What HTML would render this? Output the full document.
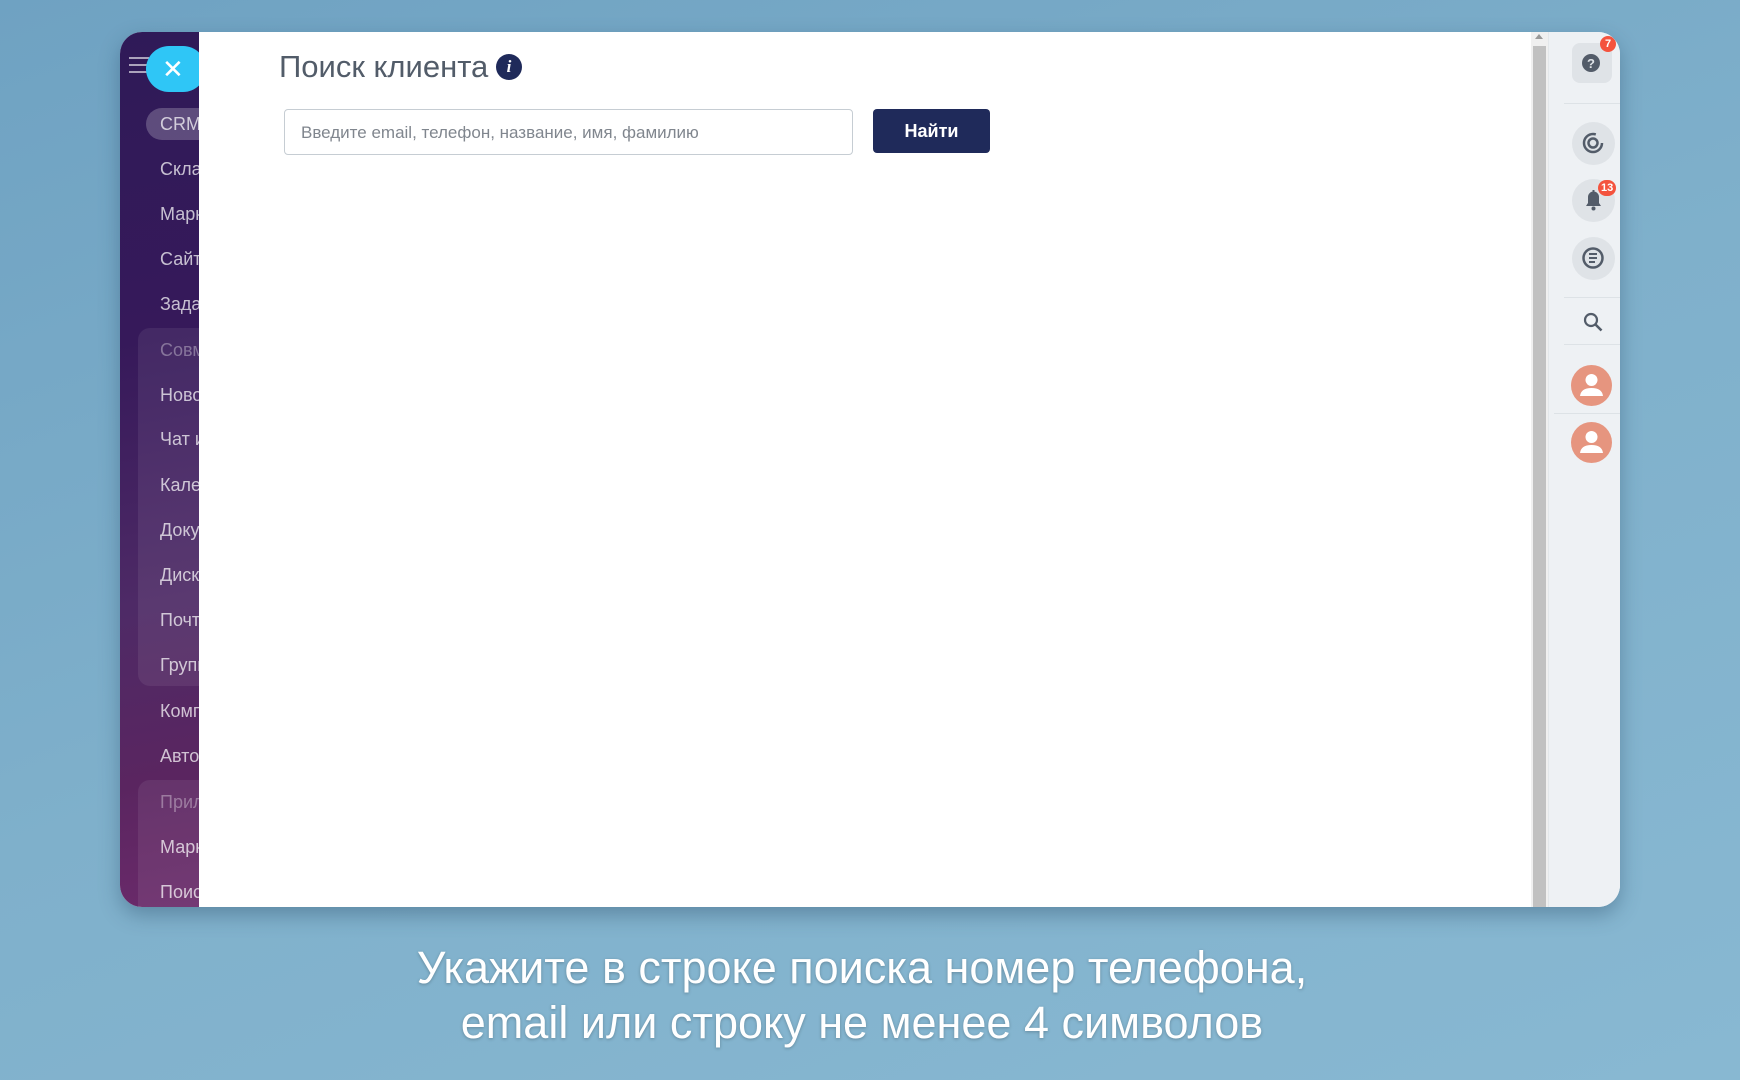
<!DOCTYPE html>
<html><head><meta charset="utf-8"><style>
*{margin:0;padding:0;box-sizing:border-box}
body{width:1740px;height:1080px;overflow:hidden;background:linear-gradient(160deg,#6fa2c2 0%,#7fb0cb 50%,#88b8d2 100%);font-family:"Liberation Sans","DejaVu Sans",sans-serif;position:relative}
.win{position:absolute;left:120px;top:32px;width:1500px;height:875px;border-radius:22px;overflow:hidden;background:#fff;box-shadow:0 8px 20px rgba(30,60,90,.35)}
.side{position:absolute;left:0;top:0;width:79px;height:100%;background:linear-gradient(170deg,#2f1a58 0%,#36195a 35%,#4e2a66 65%,#5a2560 85%,#6a2a6a 100%)}
.side .it{position:absolute;left:40px;font-size:18px;color:rgba(255,255,255,.72);white-space:nowrap}
.side .dim{color:rgba(255,255,255,.35)}
.grp{position:absolute;left:18px;width:80px;background:rgba(255,255,255,.07);border-radius:12px}
.crm{position:absolute;left:26px;top:76px;width:70px;height:32px;border-radius:16px;background:rgba(255,255,255,.22)}
.close{position:absolute;left:26px;top:14px;width:60px;height:46px;border-radius:23px;background:#2fc6f6;color:#fff;font-size:26px;line-height:46px;padding-left:16px}
.ham{position:absolute;left:9px;top:25px;width:20px}
.ham i{display:block;height:2px;background:rgba(255,255,255,.6);margin-bottom:5px}
.main{position:absolute;left:79px;top:0;width:1332px;height:100%;background:#fff}
.title{position:absolute;left:80px;top:17px;font-size:31px;color:#525c69;font-weight:300}
.info{position:absolute;left:297px;top:22px;width:26px;height:26px;border-radius:50%;background:#1f2a5a;color:#fff;font:italic bold 17px "Liberation Serif",serif;text-align:center;line-height:26px}
.inp{position:absolute;left:85px;top:77px;width:569px;height:46px;border:1px solid #c6cdd3;border-radius:4px;font-size:17px;color:#80868e;padding:13px 16px}
.btn{position:absolute;left:674px;top:77px;width:117px;height:44px;border-radius:4px;background:#1f2a5a;color:#fff;font-size:18px;font-weight:bold;text-align:center;line-height:44px}
.sb{position:absolute;left:1411px;top:0;width:17px;height:100%;background:#f0f0f0}
.sb i{position:absolute;left:2px;top:14px;width:13px;bottom:0;background:#c1c1c1}
.sb b{position:absolute;left:4px;top:2px;border:4px solid transparent;border-bottom:5px solid #999;border-top:0}
.rp{position:absolute;left:1428px;top:0;width:72px;height:100%;background:#eef1f4;border-left:1px solid #e3e7ea}
.ic{position:absolute;left:23px;width:43px;height:43px;border-radius:50%;background:#dfe3e7}
.hr{position:absolute;left:15px;right:0;height:1px;background:#dde2e6}
.badge{position:absolute;height:16px;min-width:16px;border-radius:8px;background:#f4533e;color:#fff;font-size:11px;font-weight:bold;text-align:center;line-height:16px;padding:0 3px}
.av{position:absolute;left:22px;width:41px;height:41px;border-radius:50%;background:#e6957f;overflow:hidden}
.cap{position:absolute;left:0;width:1724px;text-align:center;color:#fff;font-size:45px;line-height:55px;top:940px;text-shadow:0 1px 3px rgba(0,0,0,.25);font-weight:300}
</style></head><body>
<div class="win">
 <div class="side">
  <div class="ham"><i></i><i></i><i></i></div>
  <div class="crm"></div>
  <div class="grp" style="top:296px;height:358px"></div>
  <div class="grp" style="top:748px;height:140px"></div>
  <div class="it" style="top:82px">CRM</div>
  <div class="it" style="top:127px">Склад</div>
  <div class="it" style="top:172px">Маркет</div>
  <div class="it" style="top:217px">Сайты</div>
  <div class="it" style="top:262px">Задачи</div>
  <div class="it dim" style="top:308px">Совместная</div>
  <div class="it" style="top:353px">Новости</div>
  <div class="it" style="top:397px">Чат и</div>
  <div class="it" style="top:443px">Календарь</div>
  <div class="it" style="top:488px">Документы</div>
  <div class="it" style="top:533px">Диск</div>
  <div class="it" style="top:578px">Почта</div>
  <div class="it" style="top:623px">Группы</div>
  <div class="it" style="top:669px">Компания</div>
  <div class="it" style="top:714px">Автоматизация</div>
  <div class="it dim" style="top:760px">Приложения</div>
  <div class="it" style="top:805px">Маркет</div>
  <div class="it" style="top:850px">Поиск</div>
  <div class="close">✕</div>
 </div>
 <div class="main">
  <div class="title">Поиск клиента</div>
  <div class="info">i</div>
  <div class="inp">Введите email, телефон, название, имя, фамилию</div>
  <div class="btn">Найти</div>
 </div>
 <div class="sb"><b></b><i></i></div>
 <div class="rp">
  <div class="ic" style="top:11px;border-radius:8px;width:40px;height:40px;left:23px"><svg width="40" height="40"><circle cx="19" cy="20" r="9" fill="#535c69"/><text x="19" y="25" font-size="13" font-weight="bold" fill="#dfe3e7" text-anchor="middle" font-family="Liberation Sans">?</text></svg></div>
  <div class="badge" style="left:51px;top:4px">7</div>
  <div class="hr" style="top:71px"></div>
  <div class="ic" style="top:90px"><svg width="43" height="43"><circle cx="21" cy="21" r="9" fill="none" stroke="#535c69" stroke-width="2.5" stroke-dasharray="45 12"/><circle cx="21" cy="21" r="4.5" fill="none" stroke="#535c69" stroke-width="2.5"/></svg></div>
  <div class="ic" style="top:147px"><svg width="43" height="43"><path d="M14 27h15l-2-3v-6a5.5 5.5 0 0 0-11 0v6z" fill="#535c69"/><circle cx="21.5" cy="29.5" r="2" fill="#535c69"/><rect x="20.5" y="11" width="2" height="3" fill="#535c69"/></svg></div>
  <div class="badge" style="left:49px;top:148px">13</div>
  <div class="ic" style="top:205px"><svg width="43" height="43"><circle cx="21" cy="21" r="9.5" fill="none" stroke="#535c69" stroke-width="2.5"/><path d="M17 17h8M17 21h8M17 25h6" stroke="#535c69" stroke-width="2"/></svg></div>
  <div class="hr" style="top:265px"></div>
  <svg style="position:absolute;left:30px;top:276px" width="30" height="30"><circle cx="12" cy="12" r="6" fill="none" stroke="#535c69" stroke-width="2.2"/><path d="M16.5 16.5l6 6" stroke="#535c69" stroke-width="2.6"/></svg>
  <div class="hr" style="top:312px"></div>
  <div class="av" style="top:333px"><svg width="41" height="41"><circle cx="20.5" cy="15" r="6" fill="#fff"/><path d="M9 31q1-8 11.5-8t11.5 8z" fill="#fff"/></svg></div>
  <div class="hr" style="top:381px;left:5px"></div>
  <div class="av" style="top:390px"><svg width="41" height="41"><circle cx="20.5" cy="15" r="6" fill="#fff"/><path d="M9 31q1-8 11.5-8t11.5 8z" fill="#fff"/></svg></div>
 </div>
</div>
<div class="cap">Укажите в строке поиска номер телефона,<br>email или строку не менее 4 символов</div>
</body></html>
